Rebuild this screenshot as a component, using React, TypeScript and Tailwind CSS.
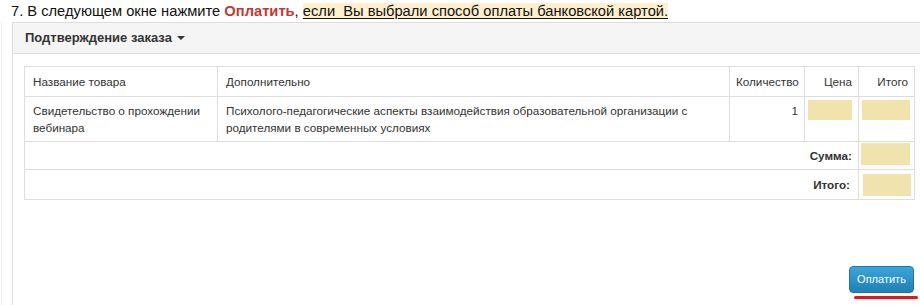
const Cell = ({ className = "", children }: { className?: string; children?: React.ReactNode }) => (
    <td className={"border border-[#dddddd] px-[8px] " + className}>{children}</td>
);

const Price = ({ className = "" }: { className?: string }) => (
    <div className={"bg-[#f0e3ae] h-[20px] " + className}></div>
);

const App = () => {
    return (
        <div className="w-[920px] h-[305px] overflow-hidden bg-white text-[#333333] font-['Liberation_Sans',Arial,sans-serif]">
            <p className="h-[22px] pl-[11px] pt-[2px] text-[14.7px] leading-[18px] text-[#111111]">
                7. В следующем окне нажмите{" "}
                <b className="text-[#c13b34]">Оплатить</b>,{" "}
                <span className="bg-[#feefcd] underline underline-offset-2">если&nbsp; Вы выбрали способ оплаты банковской картой.</span>
            </p>

            <div className="ml-[1px] border-l border-[#eeeeee] h-full">
                <div className="ml-[10px] border-l border-t border-[#dddddd] h-full">
                    <div className="h-[31px] bg-[#f5f5f5] border-b border-[#dddddd] flex items-center pl-[12px] text-[13px] font-bold text-[#333333]">
                        Подтверждение заказа
                        <span className="ml-[5px] w-0 h-0 border-l-[4px] border-r-[4px] border-t-[4px] border-l-transparent border-r-transparent border-t-[#333333]"></span>
                    </div>

                    <div className="pl-[11px] pt-[12px]">
                        <table className="w-[890px] table-fixed border-collapse text-[11.7px] leading-[17px]">
                            <colgroup>
                                <col className="w-[193px]" />
                                <col className="w-[512px]" />
                                <col className="w-[75px]" />
                                <col className="w-[54px]" />
                                <col className="w-[56px]" />
                            </colgroup>
                            <tbody>
                                <tr className="h-[30px]">
                                    <Cell className="align-middle">Название товара</Cell>
                                    <Cell className="align-middle">Дополнительно</Cell>
                                    <Cell className="align-middle text-right !px-[6px]">Количество</Cell>
                                    <Cell className="align-middle text-right !px-[6px]">Цена</Cell>
                                    <Cell className="align-middle text-right !px-[6px]">Итого</Cell>
                                </tr>
                                <tr className="h-[45px]">
                                    <Cell className="align-top pt-[5px]">Свидетельство о прохождении вебинара</Cell>
                                    <Cell className="align-top pt-[5px]">Психолого-педагогические аспекты взаимодействия образовательной организации с родителями в современных условиях</Cell>
                                    <Cell className="align-top pt-[5px] text-right !px-[6px]">1</Cell>
                                    <Cell className="align-top pt-[3px] !px-[3px]"><Price className="w-[44px]" /></Cell>
                                    <Cell className="align-top pt-[3px] !px-[3px]"><Price className="w-[48px]" /></Cell>
                                </tr>
                                <tr className="h-[28px]">
                                    <td colSpan={4} className="border border-[#dddddd] align-middle text-right font-bold pr-[6px]">Сумма:</td>
                                    <Cell className="align-top !px-[2px] pt-[1px]"><Price className="w-[49px] h-[22px]" /></Cell>
                                </tr>
                                <tr className="h-[30px]">
                                    <td colSpan={4} className="border border-[#dddddd] align-middle text-right font-bold pr-[8px]">Итого:</td>
                                    <Cell className="align-top !px-[4px] pt-[4px]"><Price className="w-[48px] h-[22px]" /></Cell>
                                </tr>
                            </tbody>
                        </table>

                        <div className="w-[890px] flex justify-end mt-[66px]">
                            <div className="relative">
                                <button className="w-[65px] h-[27px] rounded-[4px] border border-[#1f75a6] bg-gradient-to-b from-[#3aa6d8] to-[#1e80b8] text-white text-[11px] leading-none">
                                    Оплатить
                                </button>
                                <div className="absolute left-[5px] top-[30px] w-[64px] h-[3px] rounded-full bg-[#e8141c]"></div>
                            </div>
                        </div>
                    </div>
                </div>
            </div>
        </div>
    );
};

export default App;
